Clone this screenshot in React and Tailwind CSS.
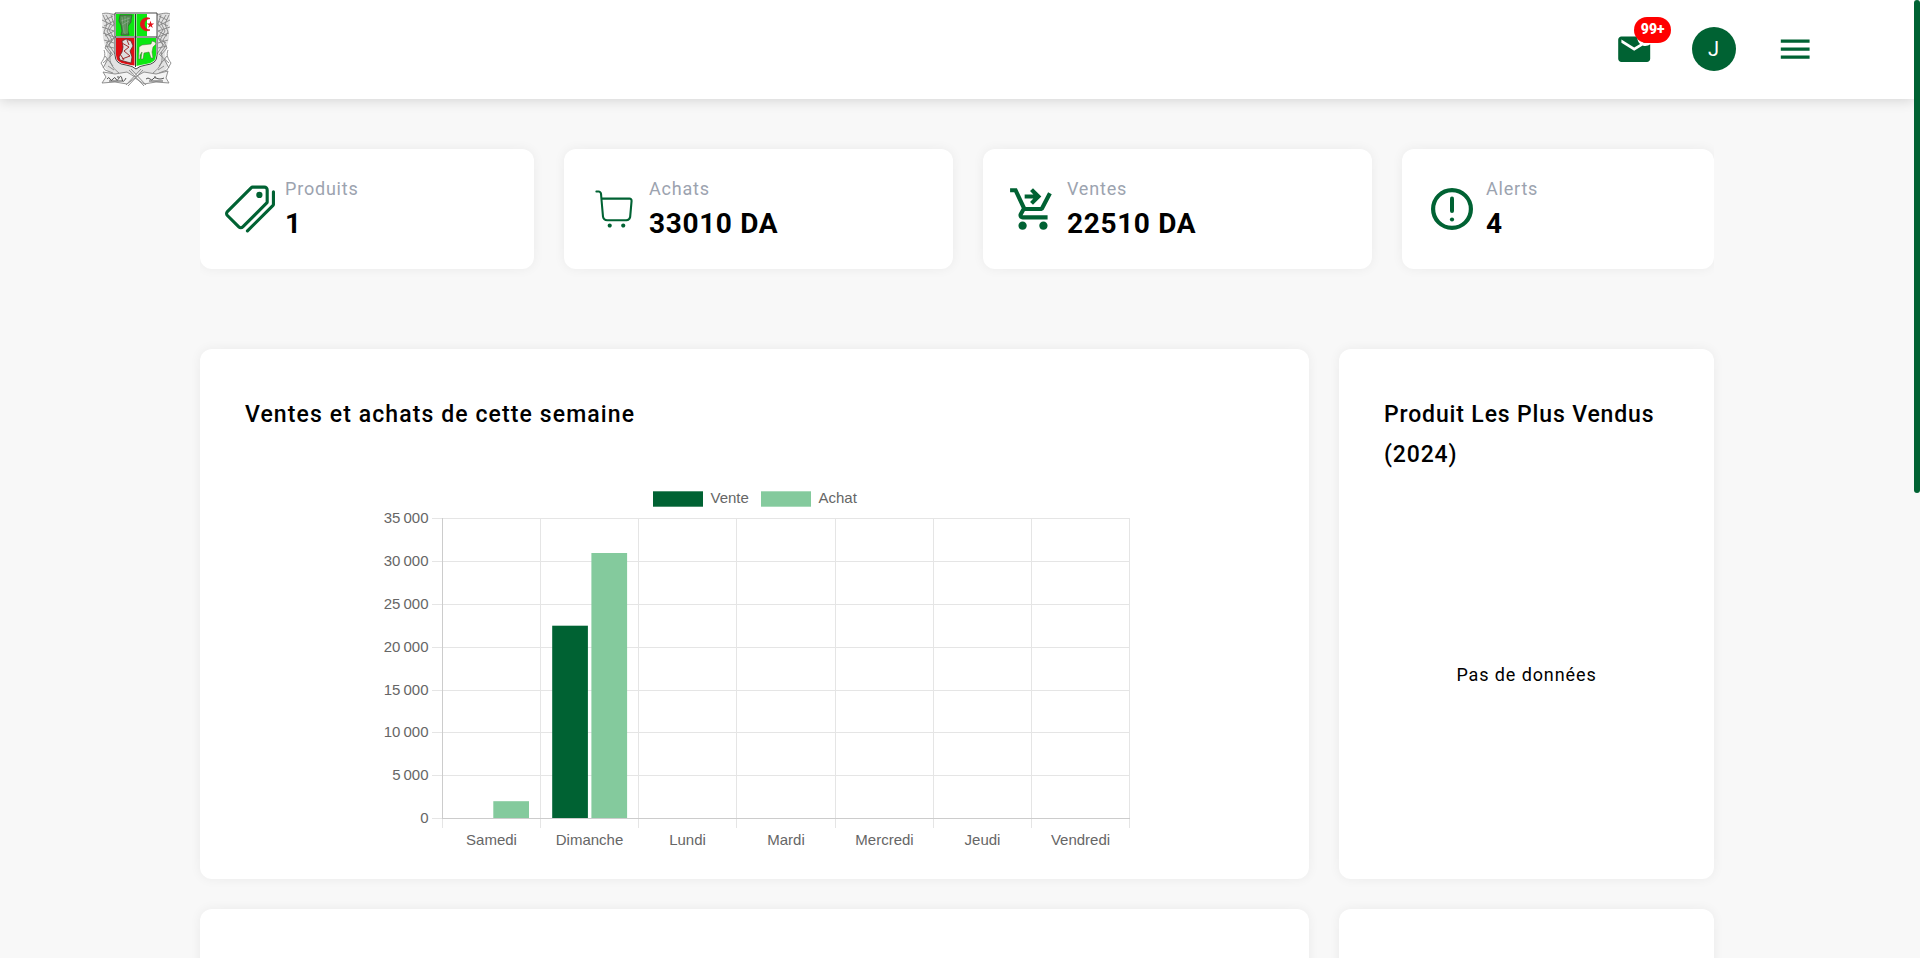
import { IoPricetagsOutline } from "react-icons/io5";
import { CiShoppingCart } from "react-icons/ci";
import { MdOutlineShoppingCartCheckout, MdMarkEmailUnread, MdMenu } from "react-icons/md";

const cardShadow = "shadow-[0_0_12px_rgba(0,0,0,0.06)]";

function Emblem() {
  return (
    <svg width="72" height="76" viewBox="0 0 72 76" className="mt-px shrink-0">
      <path d="M2 1H70L69 26 65 42 68 54 62 62H10L4 54 7 42 3 26Z" fill="#e2e2e2" />
      <g fill="none" stroke="#858585" strokeWidth="0.9">
        <path d="M2 2c4-2 9 0 13 1M3 3l4 9-3 8 5 8-4 8 6 7M6 3l5 8-4 8 5 9-5 7 6 8M11 3l3 9-5 6 5 8-5 7 6 9M2 8l12 6M2 15l12 4M3 21l11 4M4 28l10 3M5 34l9 2M5 8l8-4M4 14l10-5M5 24l9-5M6 31l8-5M4 38c2 5 0 9-3 13l4 7 8 3M5 44l8 10M3 51l9-8M11 40c-3 8 0 15 8 21M8 47l-5 9M8 54l6 4" />
        <path d="M70 2c-4-2-9 0-13 1M69 3l-4 9 3 8-5 8 4 8-6 7M66 3l-5 8 4 8-5 9 5 7-6 8M61 3l-3 9 5 6-5 8 5 7-6 9M70 8l-12 6M70 15l-12 4M69 21l-11 4M68 28l-10 3M67 34l-9 2M67 8l-8-4M68 14l-10-5M67 24l-9-5M66 31l-8-5M68 38c-2 5 0 9 3 13l-4 7-8 3M67 44l-8 10M69 51l-9-8M61 40c3 8 0 15-8 21M64 47l5 9M64 54l-6 4" />
        <path d="M3 60l12 2 12-2 8 5 9-5 12 2 12-3-2 7 3 5-13-1-12 2-9-6-8 6-12-2-13 1 4-6z" fill="#f3f3f3" />
        <path d="M29 58l15 16M43 58L28 74M31 57l15 16M41 57L26 73" />
        <path d="M7 67q2-3 3 0t3 0 3 0 3-1 3 1 4-1M9 69h14M18 64v2M46 67q2-2 4 0t3 0 3-1 4 1 4-1M49 69h14M55 64v2" stroke="#444" />
      </g>
      <path d="M15 1H57V43Q57 52 46 53Q39 54 36 57Q33 54 26 53Q15 52 15 43Z" fill="#fff" stroke="#333" strokeWidth="0.9" />
      <path d="M16 2H34.500V24H16Z" fill="#0be810" />
      <path d="M36.500 2H47V24H36.500Z" fill="#0be810" />
      <path d="M16 26H34.500V53.500Q31 53 26 52Q16 51 16 43Z" fill="#e00d13" />
      <path d="M36.500 26H56V43Q56 51 46 52Q40 53 36.500 54Z" fill="#0be810" />
      <path d="M50 6.500A6.500 6.500 0 1 0 50 18A5.200 5.200 0 1 1 50 6.500Z" fill="#e3121b" stroke="#e3121b" strokeWidth="0.8" />
      <path d="M50.500 8.800l.9 2.700h2.800l-2.300 1.700.9 2.700-2.300-1.700-2.300 1.700.9-2.700-2.300-1.700h2.800z" fill="#e3121b" />
      <path d="M20 3h12l-1 5 0 2-3 4v5l1 4h-8l1-4-1-6-2-4z" fill="#4f8b4d" stroke="#31512f" strokeWidth="0.7" />
      <path d="M22 5l2 16M25 4v18M28 5l-1 16M21 9l9-3M22 13l7-4" fill="none" stroke="#9bb098" strokeWidth="0.6" />
      <path d="M22 29l4-2 5 2 2 5-3 5 2 6-1 6-4-1-7-2-1-3 3-5 1-5z" fill="#dedede" stroke="#632727" strokeWidth="0.8" />
      <path d="M22 31l7 4-5 4 6 5-8 3M20 42l4 6M27 28l2 5" fill="none" stroke="#a02d2d" strokeWidth="1" />
      <path d="M39 35l3-2 9-1 1-3 3 1 1 2-3 3-1 5 1 6h-2l-2-6-5 1-1 6h-2l1-7-2 3v4h-1.500l.5-8z" fill="#f5f5e6" stroke="#46683d" strokeWidth="0.5" />
      <path d="M15 25H57M35.500 2V55" stroke="#333" strokeWidth="1" />
    </svg>
  );
}

function AlertIcon() {
  return (
    <svg width="42" height="42" viewBox="0 0 42 42" fill="none" stroke="currentColor">
      <circle cx="21" cy="21" r="18.900" strokeWidth="4.200" />
      <path d="M21 10.500V23" strokeWidth="4" strokeLinecap="round" />
      <circle cx="21" cy="31.500" r="2.100" fill="currentColor" stroke="none" />
    </svg>
  );
}

function StatCard({ width, pad, icon, label, value }) {
  return (
    <section className={`${width} ${cardShadow} flex h-[120px] shrink-0 rounded-xl bg-white`}>
      <div className={`${pad} flex shrink-0 items-center text-[#006233]`}>{icon}</div>
      <div className="flex flex-col pt-[26px]">
        <span className="text-[18px] leading-7 tracking-[0.8px] text-[#9ca3af]">{label}</span>
        <span className="text-[28px] font-bold leading-[42px] tracking-[0.65px] text-black">{value}</span>
      </div>
    </section>
  );
}

const days = ["Samedi", "Dimanche", "Lundi", "Mardi", "Mercredi", "Jeudi", "Vendredi"];
const columns = [72.5, 170.5, 268.5, 366.5, 465.5, 563.5, 661.5, 759.5];
const levels = [
  ["35\u202f000", 38.5],
  ["30\u202f000", 81.5],
  ["25\u202f000", 124.5],
  ["20\u202f000", 167.5],
  ["15\u202f000", 210.5],
  ["10\u202f000", 252.5],
  ["5\u202f000", 295.5],
  ["0", 338.5],
];

function WeekChart() {
  return (
    <svg width="770" height="380" viewBox="0 0 770 380" className="font-['Liberation_Sans',Arial,sans-serif] text-[15px]">
      <g stroke="#e5e5e5" strokeWidth="1">
        {levels.map(([label, y]) => (
          <path key={label} d={`M62 ${y}H760`} />
        ))}
        {columns.map((x) => (
          <path key={x} d={`M${x} 38V348`} />
        ))}
      </g>
      <path d="M72.500 38V338.500H760" fill="none" stroke="#cccccc" />
      <rect x="123.300" y="321.200" width="35.700" height="17.300" fill="#84ca9d" />
      <rect x="182.200" y="145.700" width="35.700" height="192.800" fill="#006233" />
      <rect x="221.400" y="73" width="35.700" height="265.500" fill="#84ca9d" />
      <path d="M72 338.500H760" stroke="#cccccc" />
      <rect x="283" y="11.300" width="50" height="15.400" fill="#006233" />
      <rect x="391" y="11.300" width="50" height="15.400" fill="#84ca9d" />
      <g fill="#666666">
        <text x="340.500" y="23">Vente</text>
        <text x="448.500" y="23">Achat</text>
        {levels.map(([label, y]) => (
          <text key={label} x="58.500" y={y + 4.5} textAnchor="end">
            {label}
          </text>
        ))}
        {days.map((day, i) => (
          <text key={day} x={(columns[i] + columns[i + 1]) / 2} y="365" textAnchor="middle">
            {day}
          </text>
        ))}
      </g>
    </svg>
  );
}

export default function App() {
  return (
    <div className="flex h-[958px] overflow-hidden bg-[#f8f8f8] font-[Roboto,sans-serif] text-black">
      <div className="flex w-[1914px] shrink-0 flex-col overflow-hidden">
        <header className="flex h-[99px] shrink-0 items-center justify-between bg-white pb-px pl-[100px] pr-[99.5px] shadow-[0_2px_12px_rgba(0,0,0,0.14)]">
          <Emblem />
          <div className="flex items-center text-[#006233]">
            <div className="relative mr-[38px]">
              <MdMarkEmailUnread size={38.4} />
              <span className="absolute -top-[13px] left-[19px] flex h-[26px] w-[37px] items-center justify-center rounded-full bg-[#ff0000] text-[14px] font-black text-white">
                99+
              </span>
            </div>
            <div className="mr-[40.5px] flex size-11 items-center justify-center rounded-full bg-[#006233] text-[20px] text-white">J</div>
            <MdMenu size={38.4} />
          </div>
        </header>

        <main className="mx-[200px] flex flex-col pt-[30px]">
          <div className="flex gap-[30px] overflow-hidden py-5">
            <StatCard width="w-[334px]" pad="w-[85px] pl-[25px]" icon={<IoPricetagsOutline size={50} />} label="Produits" value="1" />
            <StatCard width="w-[389px]" pad="w-[85px] pl-[25px]" icon={<CiShoppingCart size={50} />} label="Achats" value="33010 DA" />
            <StatCard width="w-[389px]" pad="w-[84px] pl-[25px]" icon={<MdOutlineShoppingCartCheckout size={50} />} label="Ventes" value="22510 DA" />
            <StatCard width="w-[312px]" pad="w-[84px] pl-[29px]" icon={<AlertIcon />} label="Alerts" value="4" />
          </div>

          <div className="mt-[60px] flex gap-[30px]">
            <section className={`${cardShadow} flex h-[530px] w-[1109px] shrink-0 flex-col rounded-xl bg-white pt-[46px]`}>
              <h2 className="pl-[45px] text-[23px] font-medium leading-10 tracking-[1.1px]">Ventes et achats de cette semaine</h2>
              <div className="mt-[45px] pl-[170px]">
                <WeekChart />
              </div>
            </section>
            <section className={`${cardShadow} flex h-[530px] w-[375px] shrink-0 flex-col rounded-xl bg-white pt-[46px]`}>
              <h2 className="pl-[45px] pr-8 text-[23px] font-medium leading-10 tracking-[0.85px]">
                Produit Les Plus Vendus
                <br />
                (2024)
              </h2>
              <p className="mt-[186px] text-center text-[18px] leading-7 tracking-[0.9px]">Pas de données</p>
            </section>
          </div>

          <div className="mt-[30px] flex gap-[30px]">
            <section className={`${cardShadow} h-[530px] w-[1109px] shrink-0 rounded-xl bg-white`} />
            <section className={`${cardShadow} h-[530px] w-[375px] shrink-0 rounded-xl bg-white`} />
          </div>
        </main>
      </div>
      <div className="h-[493px] w-1.5 shrink-0 rounded-full bg-[#006233]" />
    </div>
  );
}
